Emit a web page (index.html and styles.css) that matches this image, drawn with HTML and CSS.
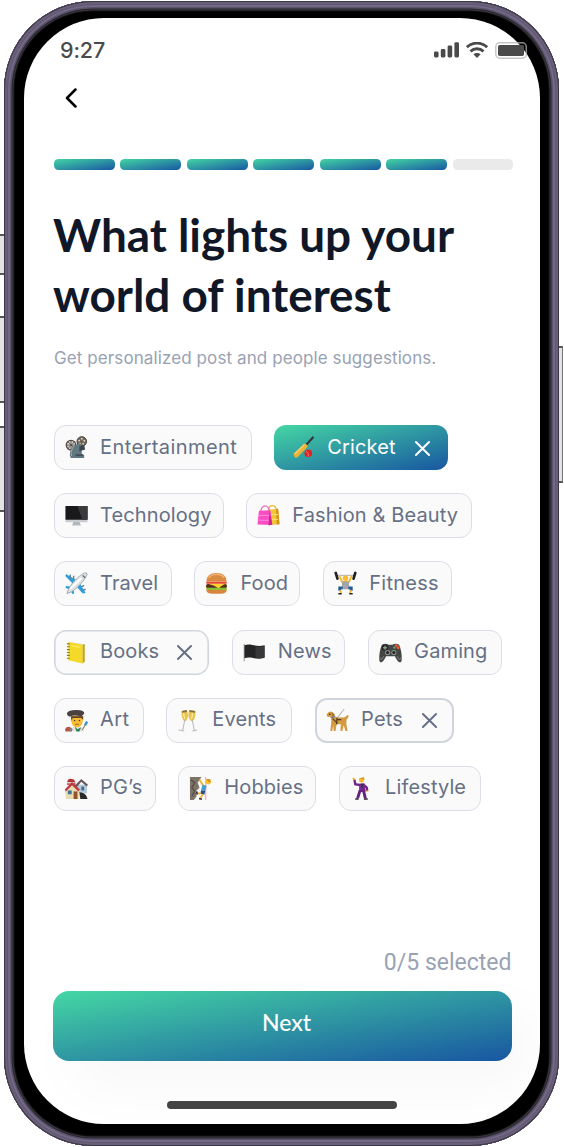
FILE: index.html
```html
<!DOCTYPE html>
<html lang="en">
<head>
<meta charset="utf-8">
<title>Interests</title>
<link rel="stylesheet" href="styles.css">
</head>
<body>
<div class="stage">
  <span class="key key-mute"></span>
  <span class="key key-up"></span>
  <span class="key key-down"></span>
  <span class="key key-power"></span>
  <div class="phone">
    <main class="screen">
      <header class="status">
        <span class="time">9:27</span>
        <span class="status-icons">
          <svg class="signal" viewBox="0 0 25 16"><rect x="0" y="9.5" width="4.6" height="6" rx="1.4"/><rect x="6.8" y="7" width="4.6" height="8.500" rx="1.4"/><rect x="13.600" y="3.500" width="4.600" height="12" rx="1.400"/><rect x="20.400" y="0.200" width="4.600" height="15.300" rx="1.400"/></svg>
          <svg class="wifi" viewBox="0 0 22 16"><g fill="none" stroke="#4a4a4a" stroke-width="2.900"><path d="M.8 5.200C6.700-.2 15.300-.2 21.200 5.200"/><path d="M4.500 9.300C8.300 5.900 13.700 5.900 17.500 9.300"/></g><path fill="#4a4a4a" d="M7.400 12.200C9.500 10.600 12.500 10.600 14.600 12.200L11 15.900Z"/></svg>
          <svg class="battery" viewBox="0 0 34 17"><rect x=".8" y=".8" width="30.500" height="15.400" rx="4" fill="none" stroke="#b4b4b4" stroke-opacity=".75" stroke-width="1.500"/><rect x="3" y="3" width="26" height="11" rx="1.800"/></svg>
        </span>
      </header>
      <button class="back" aria-label="Back"><svg viewBox="0 0 12 20"><path d="M10.500 1.500 2 10l8.500 8.500"/></svg></button>
      <div class="progress"><i></i><i></i><i></i><i></i><i></i><i></i><i class="todo"></i></div>
      <h1 class="title">What lights up your<br>world of interest</h1>
      <p class="subtitle">Get personalized post and people suggestions.</p>

      <section class="chips">
        <div class="row">
          <button class="chip entertainment">
            <svg class="emoji" viewBox="0 0 24 24"><circle cx="6.300" cy="9.500" r="5" fill="#d9d5cd" stroke="#514b46" stroke-width="1.300"/><path d="M6.300 4.500v10M1.300 9.500h10M3 6l7 7M10 6l-7 7" stroke="#514b46" stroke-width=".9"/><circle cx="17.500" cy="5.700" r="5" fill="#71665a" stroke="#443a32"/><g fill="#e0d5c5"><circle cx="17.500" cy="2.800" r="1"/><circle cx="20.200" cy="5" r="1"/><circle cx="19" cy="8.200" r="1"/><circle cx="15.500" cy="8" r="1"/><circle cx="14.700" cy="4.800" r="1"/></g><path d="M9.500 10.500 14.500 7l3 3v9l2.500 1v3H6l-1-3c0-5 2-8 4.500-9.500Z" fill="#617780"/><path d="M9 12c-3 3-3 6-2 9" stroke="#a1b0b5" fill="none"/><path d="m15 11 5-2 1 5-6 2Z" fill="#39454b"/><path d="M11 19h8v2h-8Z" fill="#405058"/></svg>
            <span>Entertainment</span></button>
          <button class="chip cricket chip-active">
            <svg class="emoji" viewBox="0 0 24 24"><path d="m15 9 6.800-7.400" stroke="#35343c" stroke-width="2.300" stroke-linecap="round"/><path d="M1.600 18.500 12.600 8.200q3.400-.4 3.500 3.200L6 22q-3.600 2-4.400-3.500Z" fill="#e9b43b"/><path d="M3 18.500 13 9" stroke="#f8d66e" stroke-width="1.200"/><circle cx="17" cy="18" r="4" fill="#dd2424"/><path d="M14.500 15.500q3 2 2.800 5.900" stroke="#ff8b80" stroke-width=".8" fill="none"/></svg>
            <span>Cricket</span><svg class="close" viewBox="0 0 16 16"><path d="m1 1 14 14M15 1 1 15"/></svg></button>
        </div>
        <div class="row">
          <button class="chip technology">
            <svg class="emoji" viewBox="0 0 24 24"><path d="M9 18h6l1.500 4.500h-9Z" fill="#aeb3b7"/><path d="M7.500 21.700h9V23h-9Z" fill="#d5d9dc"/><rect x=".5" y="2" width="23" height="17" rx=".8" fill="#c9ccd0"/><rect x=".5" y="2" width="23" height="14.500" rx=".6" fill="#19191b"/><path d="M13 2h10.500v14.500H18Z" fill="#3a3a3d"/></svg>
            <span>Technology</span></button>
          <button class="chip fashion">
            <svg class="emoji" viewBox="0 0 24 24"><path d="M12 7c0-7 8-7 8 0" fill="none" stroke="#eebd32" stroke-width="1.400"/><path d="m11 6 11-1 1.500 16L13 22Z" fill="#f3c637"/><path d="m20 5 2 0 1.500 16-3 .3Z" fill="#cf9318"/><path d="M13 11h9M13 16h9" stroke="#ffe47c"/><path d="M4 9C4-.5 13-.5 13 9" fill="none" stroke="#ec64bd" stroke-width="1.300"/><path d="m2 7 12-.5L16 22 .5 21.500Z" fill="#fa4fc4"/><path d="m13 6.500 3 15-4 1Z" fill="#cb288f"/><path d="M2 12h11M1.500 17h11" stroke="#ff8bdb"/></svg>
            <span>Fashion &amp; Beauty</span></button>
        </div>
        <div class="row">
          <button class="chip travel">
            <svg class="emoji" viewBox="0 0 24 24"><path d="M13 9 1 2 .5 4.500l9 9ZM15 11l6.500 11-3 .5-8-9ZM6 15l-5-.5-.4 2.300L5 18ZM9 18l.5 4.500-2 .4L5.500 18Z" fill="#2d9fdc"/><path d="M3.800 17.500C8 10 15 3.500 20.500 1Q23.500 0 23 3C20 9 14 16 7 20.500L2 22.500Z" fill="#dfe2e5" stroke="#868e96" stroke-width=".7"/><path d="m5.500 17.500 11.500-11" stroke="#fff" stroke-width="2"/><path d="M18.500 3.500 21 6" stroke="#596878" stroke-width="1.400"/><path d="M5.500 2.500v4M9 4v4M20 14l-3 1.500M21.500 18l-3 1" stroke="#6d7f8f" stroke-width="1.500"/></svg>
            <span>Travel</span></button>
          <button class="chip food">
            <svg class="emoji" viewBox="0 0 24 24"><path d="M1.500 16.500h21v2.300q0 4-6 4h-9q-6 0-6-4Z" fill="#d9853d"/><path d="M1 15.500q2-1.500 4 0t4 0 4 0 4 0 5.500-.5v3.500H2Z" fill="#7cc832"/><rect x="1" y="12.500" width="22" height="4" rx="2" fill="#57301c"/><path d="M2 12h20l-4 2-4 3-5-3Z" fill="#ffcf34"/><rect x="1.200" y="10" width="21.600" height="2.300" rx="1" fill="#e74a37"/><path d="M1.500 10Q1.500 1 12 1t10.500 9Z" fill="#db8a42"/><path d="M4 6q2.500-3.500 8-3.500T20 6" stroke="#f4b773" stroke-width="1.500" fill="none"/></svg>
            <span>Food</span></button>
          <button class="chip fitness">
            <svg class="emoji" viewBox="0 0 24 24"><path d="M2 3.500h20" stroke="#999" stroke-width=".8"/><path d="m1.800 1 1.800 6M22.200 1l-1.800 6" stroke="#202124" stroke-width="2.800" stroke-linecap="round"/><path d="m5.500 4 3 6.500h7l3-6.500" fill="none" stroke="#f5b72c" stroke-width="2"/><circle cx="12" cy="6.500" r="2.900" fill="#f7bd32"/><path d="M8.500 10h7l.5 8H8Z" fill="#a3a5a9"/><path d="M9 16.500H6v3M15 16.500h3v3" stroke="#275999" stroke-width="3" fill="none"/><path d="m6 19 1.500 3M18 19l-1.500 3" stroke="#f3b434" stroke-width="1.800"/><path d="M4.500 22.700h3.500M16 22.700h3.500" stroke="#222" stroke-width="1.800"/></svg>
            <span>Fitness</span></button>
        </div>
        <div class="row">
          <button class="chip books chip-picked">
            <svg class="emoji" viewBox="0 0 24 24"><path d="m5 1 16 2.500v18L18 23.500Z" fill="#ddd"/><path d="M3.500 1 18.500 3.800V23.500L3.500 20Z" fill="#f5d928"/><path d="m18.500 3.800 2-.8v18l-2 2.500Z" fill="#c6a80d"/><path d="M2 3h3M2 6h3M2 9h3M2 12h3M2 15h3M2 18h3" stroke="#867922" stroke-width="1.100"/><path d="m7 5 8 1.500" stroke="#fff07a"/></svg>
            <span>Books</span><svg class="close" viewBox="0 0 16 16"><path d="m1 1 14 14M15 1 1 15"/></svg></button>
          <button class="chip news">
            <svg class="emoji" viewBox="0 0 24 24"><path d="M1.300 3v18" stroke="#aaa" stroke-width="1.300"/><path d="M1.500 4.500c7-2.500 12 2.500 21 0v13c-9 3-14-2-21 .5Z" fill="#252528"/><path d="M13 5.500c4 1 6 .4 9.500-.5v12c-4 1.300-6 1-9.500.2Z" fill="#38383b"/></svg>
            <span>News</span></button>
          <button class="chip gaming">
            <svg class="emoji" viewBox="0 0 24 24"><path d="M3 4q4-2.500 7 0h4q3-2.500 7 0c2 5 3 10 2.700 16-1.200 5-5 1-7-4H7.300c-2 5-5.800 9-7 4C0 14 1 9 3 4Z" fill="#444643"/><path d="M1 17q1 5 4-1M23 17q-1 5-4-1" fill="none" stroke="#747672" stroke-width="1.200"/><circle cx="6.300" cy="7" r="3.300" fill="#242624"/><path d="M6.300 5v4M4.300 7h4" stroke="#949995" stroke-width="1.400"/><circle cx="9" cy="12" r="2.700" fill="#8b918e"/><circle cx="15.500" cy="12" r="2.700" fill="#8b918e"/><circle cx="9" cy="12" r="1.600" fill="#222"/><circle cx="15.500" cy="12" r="1.600" fill="#222"/><g fill="#f65b26"><circle cx="18" cy="4.800" r="1.500"/><circle cx="20" cy="7" r="1.500"/></g><circle cx="16" cy="7" r="1.200" fill="#8b918e"/></svg>
            <span>Gaming</span></button>
        </div>
        <div class="row">
          <button class="chip art">
            <svg class="emoji" viewBox="0 0 24 24"><path d="M6 23.500q0-5 6-5.500 7 0 8 5.500Z" fill="#e5e6e2"/><path d="m10 18 3 3 4-2-2 4.500h-3Z" fill="#28845a"/><path d="M6.500 7h12v6q-1 6-6 6t-6-6Z" fill="#f9bd31"/><path d="M6 7.500h13v4l-2-2H8l-1 3Z" fill="#614024"/><path d="M2 5Q2 1 12 1q9 0 8 4l-3 2.700Q9 5.500 5 8Q2 7 2 5Z" fill="#4b4140"/><circle cx="10" cy="12" r=".8" fill="#54331f"/><circle cx="15" cy="12" r=".8" fill="#54331f"/><path d="M10.500 16h4" stroke="#9f6825"/><path d="M0 21q3-5 8 0l-1 2.500H.5Z" fill="#ad5c41"/><circle cx="3" cy="21" r="1" fill="#e93f42"/><circle cx="6" cy="21.500" r="1" fill="#4ca8dd"/><path d="m18 22 3.500-6" stroke="#9a744f" stroke-width="1.200"/><path d="m21 17 2-4" stroke="#2a91d8" stroke-width="2.400"/></svg>
            <span>Art</span></button>
          <button class="chip events">
            <svg class="emoji" viewBox="0 0 24 24"><path d="m5 2 5-1q3 5 0 11L8 13Q4 10 5 2ZM13 1l6 1q1 8-3 11l-2-1q-4-6-1-11Z" fill="#e7c352"/><path d="m5 2 5-1 .6 2-5.600 1ZM13 1l6 1v2l-6-1Z" fill="#8a713a"/><path d="M7 4q-.5 4 1.500 6M16 4q.5 4-1 6" stroke="#fff1a2" stroke-width="1.300" fill="none"/><path d="m8 12-2 10M16 12l2 10M1.500 22l6 1M16 23l5-1.200" stroke="#b7bbc0" stroke-width="1.100"/></svg>
            <span>Events</span></button>
          <button class="chip pets chip-strong">
            <svg class="emoji" viewBox="0 0 24 24"><path d="m12 9 7-9" stroke="#b9bcc0" stroke-width="1.200"/><path d="M.5 6Q3 1.500 6.500 3 9 4 9.500 8.500l9 .3Q20.500 8.500 22 6.500q1.800-1 1.500 1Q23 10 21.500 11l-.3 4.500 1.300 7.500h-2.200L18.500 17l-1.500 6h-2l.5-7H11l-1 7H8l-.5-6-1 6H4.500L5.500 14V9.500L4 8.200Q1 9 .5 6Z" fill="#d49a42"/><path d="m6 3 2.800 3-1.800 2.500Z" fill="#a46a28"/><path d="m7 10 5 5M11.500 9l-.5 7M11 11h5" stroke="#594128" stroke-width="1.300"/><path d="m5 9.300 4.800-1.500" stroke="#4d82b2" stroke-width="1.200"/><circle cx="4" cy="5.500" r=".7"/></svg>
            <span>Pets</span><svg class="close" viewBox="0 0 16 16"><path d="m1 1 14 14M15 1 1 15"/></svg></button>
        </div>
        <div class="row">
          <button class="chip pgs">
            <svg class="emoji" viewBox="0 0 24 24"><path d="M12 8h11v9H12Z" fill="#b3cbdc"/><path d="m10 9 7-7 7 6-1.500 2L17 5l-5 6Z" fill="#66575c"/><path d="M2 8q0-7 5-6 4 0 4 6Z" fill="#b93138"/><path d="M2 6h8" stroke="#dedbd5" stroke-width="1.500"/><path d="m0 13 7-7 8 7v10H1Z" fill="#eadbb3"/><path d="m-.2 13 7.500-7.700L15.500 13 14 15 7.300 8.500 1 15Z" fill="#bd3a3e"/><path d="M3 14h4v4H3Z" fill="#3e7698"/><path d="M9 15h4v8H9Z" fill="#93522e"/><path d="M17 10h3v4h-3Z" fill="#446e89"/><path d="M15 16q7 0 8.500 7H16Z" fill="#29282a"/></svg>
            <span>PG’s</span></button>
          <button class="chip hobbies">
            <svg class="emoji" viewBox="0 0 24 24"><path d="M1 0h12L9 6l2 5-4 4 1 5-3 4H1Z" fill="#7c7467"/><path d="m2 3 4 3-3 5 3 4-3 5" stroke="#575148" stroke-width="1.500" fill="none"/><path d="m11 3 4.500 7" stroke="#f2b437" stroke-width="2"/><path d="M17.500 0v24" stroke="#f17c89" stroke-width=".8"/><circle cx="20" cy="5" r="2.800" fill="#f8c131"/><path d="m18 2 4 0 1 4-3-1Z" fill="#d99423"/><path d="m14 8 4.500 1-1.500 5.500-4.500-.5Z" fill="#479dd3"/><path d="m12.500 14 4.500.5-1 4-4-1Z" fill="#2c4c82"/><path d="m12 17.500-3.500-1M14.500 18 12 22" stroke="#f2b437" stroke-width="1.900"/><path d="m10.500 22.500 3 .8M8 15l.5 3.500" stroke="#333" stroke-width="1.700"/></svg>
            <span>Hobbies</span></button>
          <button class="chip lifestyle">
            <svg class="emoji" viewBox="0 0 24 24"><path d="m10.500 8.500-5-1-1-5M14 8l3.500 3 .5 3.500" stroke="#702285" stroke-width="2.400" fill="none"/><path d="m4.200 3-.8-2M18 14v1.500" stroke="#f5bb2e" stroke-width="2.300"/><path d="m9.500 7 5.500-.5 1.500 8.500-7 1Z" fill="#782691"/><path d="m10.500 14-2.500 8M14 14l2 8" stroke="#63207d" stroke-width="3"/><circle cx="12" cy="3.500" r="2.600" fill="#f8bd2d"/><path d="m9 1.500 5.500-1.500.8 3Z" fill="#dba027"/><path d="m11 7 2 5 1-5" fill="#333046"/><path d="M5.500 23H9M14.500 23h4" stroke="#26202b" stroke-width="1.500"/></svg>
            <span>Lifestyle</span></button>
        </div>
      </section>

      <footer class="footer">
        <p class="count">0/5 selected</p>
        <button class="next">Next</button>
        <span class="home"></span>
      </footer>
    </main>
  </div>
</div>
</body>
</html>
```
FILE: styles.css
```css
* { box-sizing: border-box; }
body { margin: 0; background: #fff; font-family: Inter, "Liberation Sans", sans-serif; }
button { font: inherit; border: 0; background: none; padding: 0; }
.stage { position: relative; width: 564px; height: 1147px; padding: 1px 5px 1px 3.5px; overflow: hidden; }
.phone {
  position: relative; height: 1145px; border-radius: 89px; padding: 16.500px 19px 22px 20.500px; background: #000;
  box-shadow: inset 0 0 0 1px #3c3748, inset 0 0 0 3px #695f78, inset 0 0 0 4px #615870, inset 0 0 0 6px #716987, inset 0 0 0 7.500px #5b5267, inset 0 0 0 8.500px #292631, inset 0 0 0 9.500px #39363e, inset 0 0 0 10.500px #101010;
}
.key { position: absolute; background: #e4e2e3; border: solid #57545a; border-width: 2px 0; }
.key-mute { left: 0; top: 234px; width: 5px; height: 41px; }
.key-up { left: 0; top: 316px; width: 5px; height: 87px; }
.key-down { left: 0; top: 426px; width: 5px; height: 86px; }
.key-power { left: 558px; top: 346px; width: 5px; height: 137px; border-right: 1px solid #77737b; }
.screen { height: 1106.500px; border-radius: 80px; background: #fff; display: flex; flex-direction: column; padding-top: 22.500px; }
.status { height: 20px; padding-left: 36px; display: flex; justify-content: space-between; align-items: center; flex: none; }
.time { font-size: 21.500px; line-height: 20px; font-weight: 500; color: #4a4a4a; letter-spacing: -.1px; }
.status-icons { display: flex; gap: 7px; align-items: center; margin-right: 11.500px; fill: #4a4a4a; }
.signal { width: 25px; height: 16px; }
.wifi { width: 22px; height: 16px; }
.battery { width: 34px; height: 17px; }
.back { width: 12px; height: 20px; margin: 27.500px 0 0 41px; flex: none; }
.back svg { display: block; width: 12px; height: 20px; fill: none; stroke: #000; stroke-width: 2.500; stroke-linecap: round; stroke-linejoin: round; }
.progress { display: grid; grid-template-columns: repeat(7, 1fr); gap: 5.500px; margin: 51.500px 26.500px 0 30px; flex: none; }
.progress i { height: 11px; border-radius: 4.500px; background: linear-gradient(to bottom right, #43d5a4, #1857a2); }
.progress .todo { background: #eaeaea; }
.title { margin: 35px 0 0 29px; font: 700 45.900px/60px Lato, sans-serif; color: #101828; white-space: nowrap; }
.subtitle { margin: 23px 0 0 30px; font-size: 17px; line-height: 20px; letter-spacing: .1px; color: #98a2b3; white-space: nowrap; }
.chips { display: flex; flex-direction: column; gap: 23.200px; margin: 57px 0 0 30px; }
.row { display: flex; gap: 22.800px; }
.chip {
  height: 45px; border: 1px solid #dcdde7; border-radius: 12px; background: #fafafa; color: #667085; flex: none;
  display: flex; align-items: center; padding: 0 0 0 10px; font-size: 20px; line-height: 24px; letter-spacing: .12px; white-space: nowrap;
}
.chip span { margin: -2px 0 0 12px; }
.emoji { width: 23px; height: 23px; flex: none; overflow: visible; }
.close { width: 15px; height: 15px; margin: 1px 16px 0 auto; fill: none; stroke: currentColor; stroke-width: 2.100; stroke-linecap: round; overflow: visible; }
.entertainment { width: 197.500px; letter-spacing: .42px; }
.cricket { width: 173.500px; }
.technology { width: 169.500px; }
.fashion { width: 225.500px; }
.travel { width: 117.700px; }
.food { width: 106px; }
.fitness { width: 129px; letter-spacing: .25px; }
.books { width: 155px; }
.news { width: 113.500px; }
.gaming { width: 133.500px; }
.art { width: 89.500px; letter-spacing: .4px; }
.events { width: 126px; }
.pets { width: 138.500px; }
.pgs { width: 101.500px; }
.hobbies { width: 138px; }
.lifestyle { width: 141.500px; }
.chip-active { border: 0; color: #fff; padding-left: 18px; background: linear-gradient(to bottom right, #45d7a4, #1856a1); }
.chip-active .close { margin-right: 17.500px; }
.chip-picked { box-shadow: inset 0 0 0 .6px #d0d5dd; border-color: #d0d5dd; }
.chip-strong { border: 2px solid #d0d5dd; padding-left: 9px; }
.chip-strong .close { margin-right: 15px; }
.footer { margin-top: auto; height: 194px; border-radius: 0 0 80px 80px; overflow: hidden; padding: 20px 28.500px 0; display: flex; flex-direction: column; flex: none; }
.count { margin: 0; text-align: right; font: 400 23px/26px Roboto, sans-serif; color: #98a2b3; }
.next {
  height: 70px; margin-top: 14.500px; border-radius: 16px; color: #fff; font: 500 23px/28px Lato, sans-serif; padding: 0 0 8px 9px; flex: none;
  background: linear-gradient(to bottom right, #45d7a4, #1856a1); box-shadow: 20px 24px 60px rgba(0, 0, 0, .035);
}
.home { width: 230px; height: 8px; border-radius: 4px; background: #444; margin: 40px auto 0; flex: none; }
```
